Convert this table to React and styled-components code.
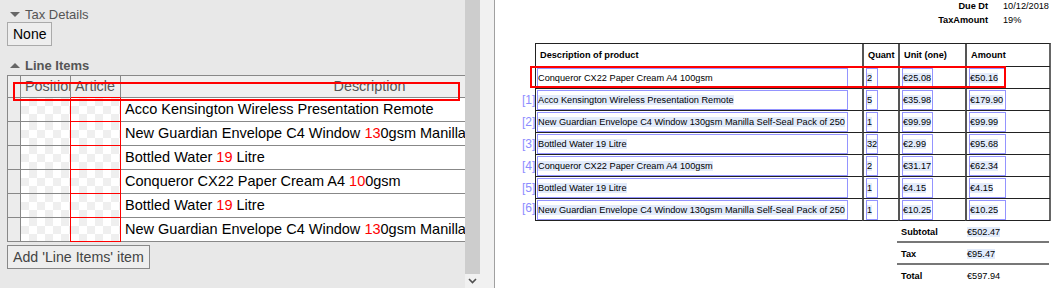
import React from 'react';
import styled, { createGlobalStyle } from 'styled-components';

const GlobalStyle = createGlobalStyle`
  html, body {
    margin: 0;
    padding: 0;
    background: #fff;
  }
  body {
    font-family: "Liberation Sans", Arial, sans-serif;
  }
`;

const Page = styled.div`
  display: flex;
  width: 1061px;
  height: 288px;
  overflow: hidden;
`;

/* ---------- left: form editor ---------- */

const Editor = styled.div`
  flex-shrink: 0;
  width: 458px;
  height: 288px;
  padding: 6px 0 0 7px;
  background: #e8e8e8;
  overflow: hidden;
`;

const SectionTitle = styled.div`
  display: flex;
  align-items: center;
  height: 16px;
  margin-top: ${p => p.$gap || 0}px;
  font-size: 13px;
  font-weight: ${p => (p.$bold ? 'bold' : 'normal')};
  color: #555;
  white-space: nowrap;
`;

const Caret = styled.span`
  width: 0;
  height: 0;
  margin: 0 5px 0 3px;
  border-left: 5px solid transparent;
  border-right: 5px solid transparent;
  ${p => (p.$up ? 'border-bottom: 5px solid #666;' : 'border-top: 5px solid #666;')}
`;

const Button = styled.button`
  display: block;
  height: 24px;
  margin-top: ${p => p.$gap || 0}px;
  padding: 0 5px;
  border: 1px solid ${p => p.$border || '#aaa'};
  background: #eee;
  font-family: "Liberation Sans", Arial, sans-serif;
  font-size: ${p => p.$size || 14}px;
  color: ${p => p.$color || '#000'};
  white-space: nowrap;
`;

const GridWrap = styled.div`
  position: relative;
  margin-top: 2px;
  width: 608px;
`;

const Grid = styled.div`
  display: grid;
  grid-template-columns: 13px 50px 50px 494px;
  border-top: 1px solid #888;
  border-left: 1px solid #888;
`;

const HeadCell = styled.div`
  height: 22px;
  box-sizing: border-box;
  padding: 0 0 0 4px;
  border-right: 1px solid #888;
  border-bottom: 1px solid ${p => (p.$red ? 'red' : '#888')};
  background: #efefef;
  font-size: 14.4px;
  line-height: 21px;
  color: #555;
  text-align: ${p => (p.$center ? 'center' : 'left')};
  white-space: nowrap;
  overflow: hidden;
`;

const Cell = styled.div`
  height: 24px;
  box-sizing: border-box;
  border-right: 1px solid #888;
  border-bottom: 1px solid #888;
  background: #ececec;
`;

const CheckerCell = styled(Cell)`
  background-color: #fff;
  background-image:
    linear-gradient(45deg, #efefef 25%, transparent 25%, transparent 75%, #efefef 75%),
    linear-gradient(45deg, #efefef 25%, transparent 25%, transparent 75%, #efefef 75%);
  background-size: 16px 16px;
  background-position: 0 0, 8px 8px;
  ${p => p.$red && `
    border-right-color: red;
    border-bottom-color: red;
    box-shadow: -1px 0 0 red;
  `}
`;

const TextCell = styled(Cell)`
  padding-left: 4px;
  background: #fff;
  font-size: 14.5px;
  line-height: 23px;
  color: #000;
  white-space: nowrap;
  overflow: hidden;
`;

const Red = styled.span`
  color: #f00;
`;

const Highlight = styled.div`
  position: absolute;
  left: ${p => p.$x}px;
  top: ${p => p.$y}px;
  width: ${p => p.$w}px;
  height: ${p => p.$h}px;
  box-sizing: border-box;
  border: 2px solid #f00;
  pointer-events: none;
`;

const ScrollTrack = styled.div`
  flex-shrink: 0;
  display: flex;
  flex-direction: column;
  width: 20px;
  background: #f1f1f1;
`;

const Thumb = styled.div`
  width: 15px;
  height: 274px;
  background: #cdcdcd;
`;

const ArrowDown = styled.div`
  width: 15px;
  height: 14px;
  display: flex;
  align-items: center;
  justify-content: center;
`;

const Gutter = styled.div`
  flex-shrink: 0;
  width: 9px;
  background: #f1f1f1;
  border-right: 1px solid #a0a0a0;
`;

/* ---------- right: pdf preview ---------- */

const Preview = styled.div`
  flex: 1;
  background: #fff;
  font-size: 9.2px;
  color: #000;
`;

const Meta = styled.div`
  display: grid;
  grid-template-columns: 60px 60px;
  column-gap: 15px;
  margin: -1px 0 0 433px;
  line-height: 14px;
`;

const MetaLabel = styled.div`
  font-weight: bold;
  text-align: right;
  white-space: nowrap;
`;

const PdfWrap = styled.div`
  position: relative;
  width: 516px;
  margin: 16px 0 0 40px;
`;

const PdfTable = styled.div`
  display: grid;
  grid-template-columns: 326px 36px 67px 85px;
  border-top: 1px solid #222;
  border-left: 1px solid #222;
  border-right: 2px solid #666;
`;

const PdfCell = styled.div`
  position: relative;
  height: ${p => (p.$head ? 23 : 22)}px;
  box-sizing: border-box;
  padding-left: ${p => (p.$sep ? 2 : 1)}px;
  border-bottom: 1px solid #222;
  ${p => p.$sep && 'border-left: 2px solid #555;'}
  ${p => p.$head && 'font-weight: bold; line-height: 22px; padding-left: 4px;'}
  white-space: nowrap;
`;

const BoxOutline = styled.div`
  width: ${p => p.$w}px;
  height: 20px;
  margin-top: 1px;
  box-sizing: border-box;
  border: 1px solid #9494ff;
  line-height: 18px;
  white-space: nowrap;
`;

const Mark = styled.span`
  background: ${p => (p.$on ? '#e2ebfb' : 'transparent')};
`;

const RowNo = styled.span`
  position: absolute;
  left: -14px;
  top: ${p => p.$top}px;
  font-size: 12px;
  line-height: 14px;
  color: #8c8cff;
`;

const Summary = styled.div`
  display: grid;
  grid-template-columns: 67px 85px;
  width: 152px;
  margin-left: 402px;
`;

const SumCell = styled.div`
  height: 22px;
  box-sizing: border-box;
  padding-left: ${p => (p.$label ? 4 : 3)}px;
  line-height: 22px;
  font-weight: ${p => (p.$label ? 'bold' : 'normal')};
  border-bottom: ${p => (p.$line ? '2px solid #777' : 'none')};
`;

const lineItems = [
  <>Acco Kensington Wireless Presentation Remote</>,
  <>New Guardian Envelope C4 Window <Red>13</Red>0gsm Manilla Self-Seal Pack of 250</>,
  <>Bottled Water <Red>19</Red> Litre</>,
  <>Conqueror CX22 Paper Cream A4 <Red>10</Red>0gsm</>,
  <>Bottled Water <Red>19</Red> Litre</>,
  <>New Guardian Envelope C4 Window <Red>13</Red>0gsm Manilla Self-Seal Pack of 250</>,
];

const pdfRows = [
  ['Conqueror CX22 Paper Cream A4 100gsm', '2', '€25.08', '€50.16'],
  ['Acco Kensington Wireless Presentation Remote', '5', '€35.98', '€179.90'],
  ['New Guardian Envelope C4 Window 130gsm Manilla Self-Seal Pack of 250', '1', '€99.99', '€99.99'],
  ['Bottled Water 19 Litre', '32', '€2.99', '€95.68'],
  ['Conqueror CX22 Paper Cream A4 100gsm', '2', '€31.17', '€62.34'],
  ['Bottled Water 19 Litre', '1', '€4.15', '€4.15'],
  ['New Guardian Envelope C4 Window 130gsm Manilla Self-Seal Pack of 250', '1', '€10.25', '€10.25'],
];

const boxWidths = [311, 12, 31, 37];

export default function App() {
  return (
    <>
      <GlobalStyle />
      <Page>
        <Editor>
          <SectionTitle>
            <Caret />
            Tax Details
          </SectionTitle>
          <Button>None</Button>

          <SectionTitle $bold $gap={11}>
            <Caret $up />
            Line Items
          </SectionTitle>
          <GridWrap>
            <Grid>
              <HeadCell />
              <HeadCell>Position</HeadCell>
              <HeadCell $red>Article</HeadCell>
              <HeadCell $center>Description</HeadCell>
              {lineItems.map((text, i) => (
                <React.Fragment key={i}>
                  <Cell />
                  <CheckerCell />
                  <CheckerCell $red />
                  <TextCell>{text}</TextCell>
                </React.Fragment>
              ))}
            </Grid>
            <Highlight $x={6} $y={7} $w={447} $h={19} />
          </GridWrap>
          <Button $gap={3} $border="#888" $color="#444" $size={14.2}>
            Add 'Line Items' item
          </Button>
        </Editor>

        <ScrollTrack>
          <Thumb />
          <ArrowDown>
            <svg width="9" height="6" viewBox="0 0 9 6">
              <path d="M1 1 L4.5 4.5 L8 1" fill="none" stroke="#505050" strokeWidth="1.6" />
            </svg>
          </ArrowDown>
        </ScrollTrack>
        <Gutter />

        <Preview>
          <Meta>
            <MetaLabel>Due Dt</MetaLabel>
            <div>10/12/2018</div>
            <MetaLabel>TaxAmount</MetaLabel>
            <div>19%</div>
          </Meta>

          <PdfWrap>
            <PdfTable>
              <PdfCell $head>Description of product</PdfCell>
              <PdfCell $head $sep>Quant</PdfCell>
              <PdfCell $head $sep>Unit (one)</PdfCell>
              <PdfCell $head $sep>Amount</PdfCell>
              {pdfRows.map((row, r) => (
                <React.Fragment key={r}>
                  {row.map((value, c) => (
                    <PdfCell key={c} $sep={c > 0}>
                      {c === 0 && r > 0 && <RowNo $top={r === 6 ? 2 : 4}>[{r}]</RowNo>}
                      <BoxOutline $w={boxWidths[c]}>
                        <Mark $on={r > 0 || c > 0}>{value}</Mark>
                      </BoxOutline>
                    </PdfCell>
                  ))}
                </React.Fragment>
              ))}
            </PdfTable>
            <Highlight $x={-5} $y={23} $w={476} $h={22} />
          </PdfWrap>

          <Summary>
            <SumCell $label $line>Subtotal</SumCell>
            <SumCell $line><Mark $on>€502.47</Mark></SumCell>
            <SumCell $label $line>Tax</SumCell>
            <SumCell $line><Mark $on>€95.47</Mark></SumCell>
            <SumCell $label>Total</SumCell>
            <SumCell>€597.94</SumCell>
          </Summary>
        </Preview>
      </Page>
    </>
  );
}
